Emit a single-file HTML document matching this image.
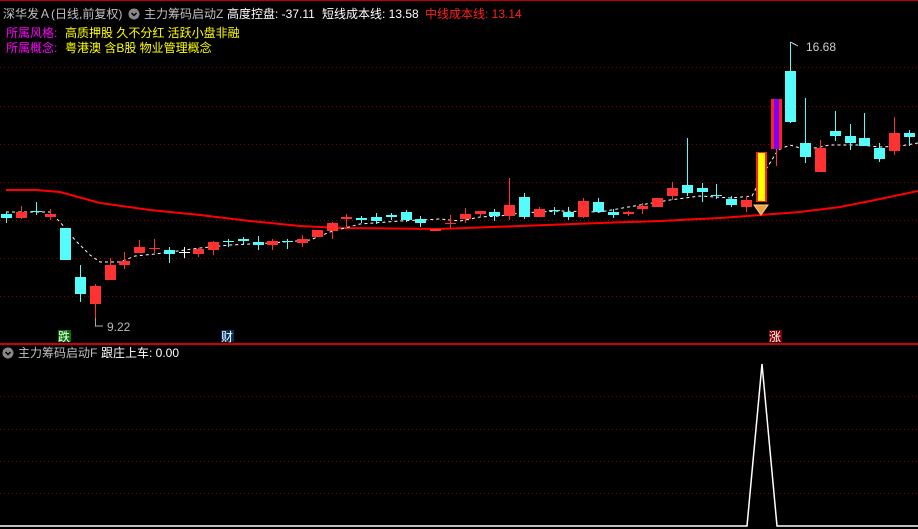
<!DOCTYPE html>
<html><head><meta charset="utf-8"><style>
html,body{margin:0;padding:0;background:#000;width:918px;height:529px;overflow:hidden}
svg{display:block}
text{font-family:"Liberation Sans","Noto Sans CJK SC","WenQuanYi Zen Hei",sans-serif;font-size:12px}
</style></head><body>
<svg width="918" height="529" viewBox="0 0 918 529" xmlns="http://www.w3.org/2000/svg" shape-rendering="crispEdges">
<rect width="918" height="529" fill="#000"/>
<line x1="0" y1="0.5" x2="918" y2="0.5" stroke="#c00000"/>
<!-- grid -->
<g stroke="#8a0000" stroke-dasharray="1 3">
<line x1="0" y1="67.5" x2="918" y2="67.5"/><line x1="0" y1="106.5" x2="918" y2="106.5"/>
<line x1="0" y1="144.5" x2="918" y2="144.5"/><line x1="0" y1="182.5" x2="918" y2="182.5"/>
<line x1="0" y1="220.5" x2="918" y2="220.5"/><line x1="0" y1="258.5" x2="918" y2="258.5"/>
<line x1="0" y1="296.5" x2="918" y2="296.5"/>
<line x1="0" y1="396.5" x2="918" y2="396.5"/><line x1="0" y1="429.5" x2="918" y2="429.5"/>
<line x1="0" y1="461.5" x2="918" y2="461.5"/><line x1="0" y1="493.5" x2="918" y2="493.5"/>
</g>
<line x1="0" y1="344" x2="918" y2="344" stroke="#d00000" stroke-width="2"/>
<!-- red MA -->
<polyline fill="none" stroke="#ff0000" stroke-width="2" shape-rendering="auto" points="6,190 36,190 60,192 100,203 150,210 200,215 250,221 300,226 340,228 440,229 520,226 600,223 660,221 720,218 761,215 800,212 840,207 880,199 918,191"/>
<!-- white dashed MA -->
<polyline fill="none" stroke="#fff" stroke-width="1" stroke-dasharray="3 3" shape-rendering="auto" points="6,212 50,212 60,222 75,240 90,255 100,262 120,262 135,256 155,254 200,248 230,245 270,243 310,240 330,232 345,228 360,224 400,221 440,219 460,221 480,217 500,216 520,213 560,211 600,212 640,205 670,200 700,196 730,198 752,196 765,171 778,150 790,145 800,148 815,148 830,145 860,145 880,147 900,146 918,143"/>
<!-- red candles -->
<g fill="#ff3232" stroke="#ff3232">
<path fill="none" d="M21.5 206V219M50.5 209V220M95.5 284V327M110.5 258V280M124.5 252V269M139.5 240V253M154.5 239V253M198.5 248V257M213.5 241V255M272.5 239V250M302.5 235V247M332.5 222V239M346.5 214V227M450.5 215V228M465.5 208V223M480.5 211V217M509.5 178V220M539.5 207V217M583.5 198V218M628.5 211V216M642.5 203V214M672.5 182V200M746.5 196V212M820.5 140V172M894.5 117V155M776.5 148V166"/>
<g stroke="none">
<rect x="16" y="212" width="11" height="6"/><rect x="45" y="214" width="11" height="3"/>
<rect x="90" y="286" width="11" height="18"/><rect x="105" y="265" width="11" height="15"/>
<rect x="119" y="261" width="11" height="4"/><rect x="134" y="247" width="11" height="6"/>
<rect x="149" y="248" width="11" height="1"/><rect x="193" y="249" width="11" height="5"/>
<rect x="208" y="242" width="11" height="8"/><rect x="267" y="241" width="11" height="4"/>
<rect x="297" y="239" width="11" height="4"/><rect x="312" y="230" width="11" height="7"/>
<rect x="327" y="223" width="11" height="8"/><rect x="341" y="217" width="11" height="2"/>
<rect x="430" y="229" width="11" height="2"/><rect x="445" y="223" width="11" height="1"/>
<rect x="460" y="214" width="11" height="5"/><rect x="475" y="211" width="11" height="3"/>
<rect x="504" y="205" width="11" height="11"/><rect x="534" y="209" width="11" height="8"/>
<rect x="578" y="201" width="11" height="16"/><rect x="623" y="212" width="11" height="2"/>
<rect x="637" y="206" width="11" height="3"/><rect x="652" y="198" width="11" height="9"/>
<rect x="667" y="188" width="11" height="8"/><rect x="741" y="200" width="11" height="7"/>
<rect x="815" y="148" width="11" height="24"/><rect x="889" y="133" width="11" height="18"/>
</g></g>
<!-- cyan candles -->
<g fill="#54fcfc" stroke="#54fcfc">
<path fill="none" d="M6.5 212V223M36.5 202V215M80.5 265V302M169.5 247V263M228.5 239V247M243.5 237V244M258.5 236V250M287.5 239V249M361.5 216V223M376.5 213V224M391.5 213V220M406.5 210V222M420.5 216V227M494.5 209V221M524.5 193V219M554.5 207V215M568.5 207V220M598.5 198V213M613.5 209V218M687.5 138V196M702.5 183V202M716.5 184V199M731.5 196V207M790.5 42V123M805.5 98V163M835.5 111V141M850.5 124V150M864.5 113V146M879.5 143V162M909.5 130V146"/>
<g stroke="none">
<rect x="1" y="214" width="11" height="4"/><rect x="31" y="211" width="11" height="1"/>
<rect x="60" y="228" width="11" height="32"/><rect x="75" y="277" width="11" height="17"/>
<rect x="164" y="250" width="11" height="4"/><rect x="223" y="241" width="11" height="1"/>
<rect x="238" y="239" width="11" height="2"/><rect x="253" y="242" width="11" height="3"/>
<rect x="282" y="241" width="11" height="1"/><rect x="356" y="218" width="11" height="2"/>
<rect x="371" y="217" width="11" height="4"/><rect x="386" y="215" width="11" height="2"/>
<rect x="401" y="212" width="11" height="8"/><rect x="415" y="219" width="11" height="4"/>
<rect x="489" y="212" width="11" height="4"/><rect x="519" y="197" width="11" height="20"/>
<rect x="549" y="210" width="11" height="1"/><rect x="563" y="212" width="11" height="5"/>
<rect x="593" y="202" width="11" height="10"/><rect x="608" y="212" width="11" height="3"/>
<rect x="682" y="185" width="11" height="8"/><rect x="697" y="188" width="11" height="4"/>
<rect x="711" y="195" width="11" height="1"/><rect x="726" y="199" width="11" height="6"/>
<rect x="785" y="71" width="11" height="51"/><rect x="800" y="143" width="11" height="14"/>
<rect x="830" y="131" width="11" height="5"/><rect x="845" y="136" width="11" height="7"/>
<rect x="859" y="138" width="11" height="8"/><rect x="874" y="148" width="11" height="11"/>
<rect x="904" y="133" width="11" height="4"/>
</g></g>
<!-- white cross -->
<path d="M184.5 247V258M179 252.5H190" stroke="#fff"/>
<!-- special -->
<rect x="756" y="152" width="11" height="50" fill="#ff2020"/>
<rect x="758" y="153" width="7" height="48" fill="#ffff00"/>
<rect x="771" y="99" width="11" height="50" fill="#ff2020"/>
<rect x="774" y="99" width="5" height="50" fill="#8000ff"/>
<polygon points="754,205 768,205 761,215" fill="#f0a040" stroke="#ffd090" shape-rendering="auto"/>
<!-- labels -->
<path d="M95.5 318V326M96 326H103" stroke="#aaa" fill="none"/>
<text x="107" y="331" fill="#bbb">9.22</text>
<path d="M790.5 42L798 46" stroke="#ccc"/>
<text x="806" y="51" fill="#ccc">16.68</text>
<rect x="58" y="330" width="13" height="12" fill="#007000"/>
<text x="58" y="341" fill="#fff">跌</text>
<rect x="221" y="330" width="13" height="12" fill="#003060"/>
<text x="221" y="341" fill="#fff">财</text>
<rect x="769" y="330" width="13" height="12" fill="#800000"/>
<text x="769" y="341" fill="#fff">涨</text>
<!-- header -->
<text x="3" y="18" fill="#c0c0c0">深华发Ａ(日线,前复权)</text>
<circle cx="134" cy="14" r="5.5" fill="#888"/><path d="M131.5 13L134 15.5 136.5 13" stroke="#000" stroke-width="1.5" fill="none" shape-rendering="auto"/>
<text x="144" y="18" fill="#c0c0c0">主力筹码启动Z</text>
<text x="227" y="18" fill="#fff">高度控盘: -37.11</text>
<text x="322" y="18" fill="#fff">短线成本线: 13.58</text>
<text x="425" y="18" fill="#ff2020">中线成本线: 13.14</text>
<text x="6" y="37" fill="#ff00ff">所属风格:</text>
<text x="65" y="37" fill="#ffff00">高质押股 久不分红 活跃小盘非融</text>
<text x="6" y="52" fill="#ff00ff">所属概念:</text>
<text x="65" y="52" fill="#ffff00">粤港澳 含B股 物业管理概念</text>
<!-- bottom panel -->
<circle cx="8" cy="353" r="5.5" fill="#888"/><path d="M5.5 352L8 354.5 10.5 352" stroke="#000" stroke-width="1.5" fill="none" shape-rendering="auto"/>
<text x="18" y="357" fill="#c0c0c0">主力筹码启动F</text>
<text x="101" y="357" fill="#fff">跟庄上车: 0.00</text>
<polyline fill="none" stroke="#fff" stroke-width="1.5" shape-rendering="auto" points="0,526 747,526 762,364 777,526 918,526"/>
</svg>
</body></html>
